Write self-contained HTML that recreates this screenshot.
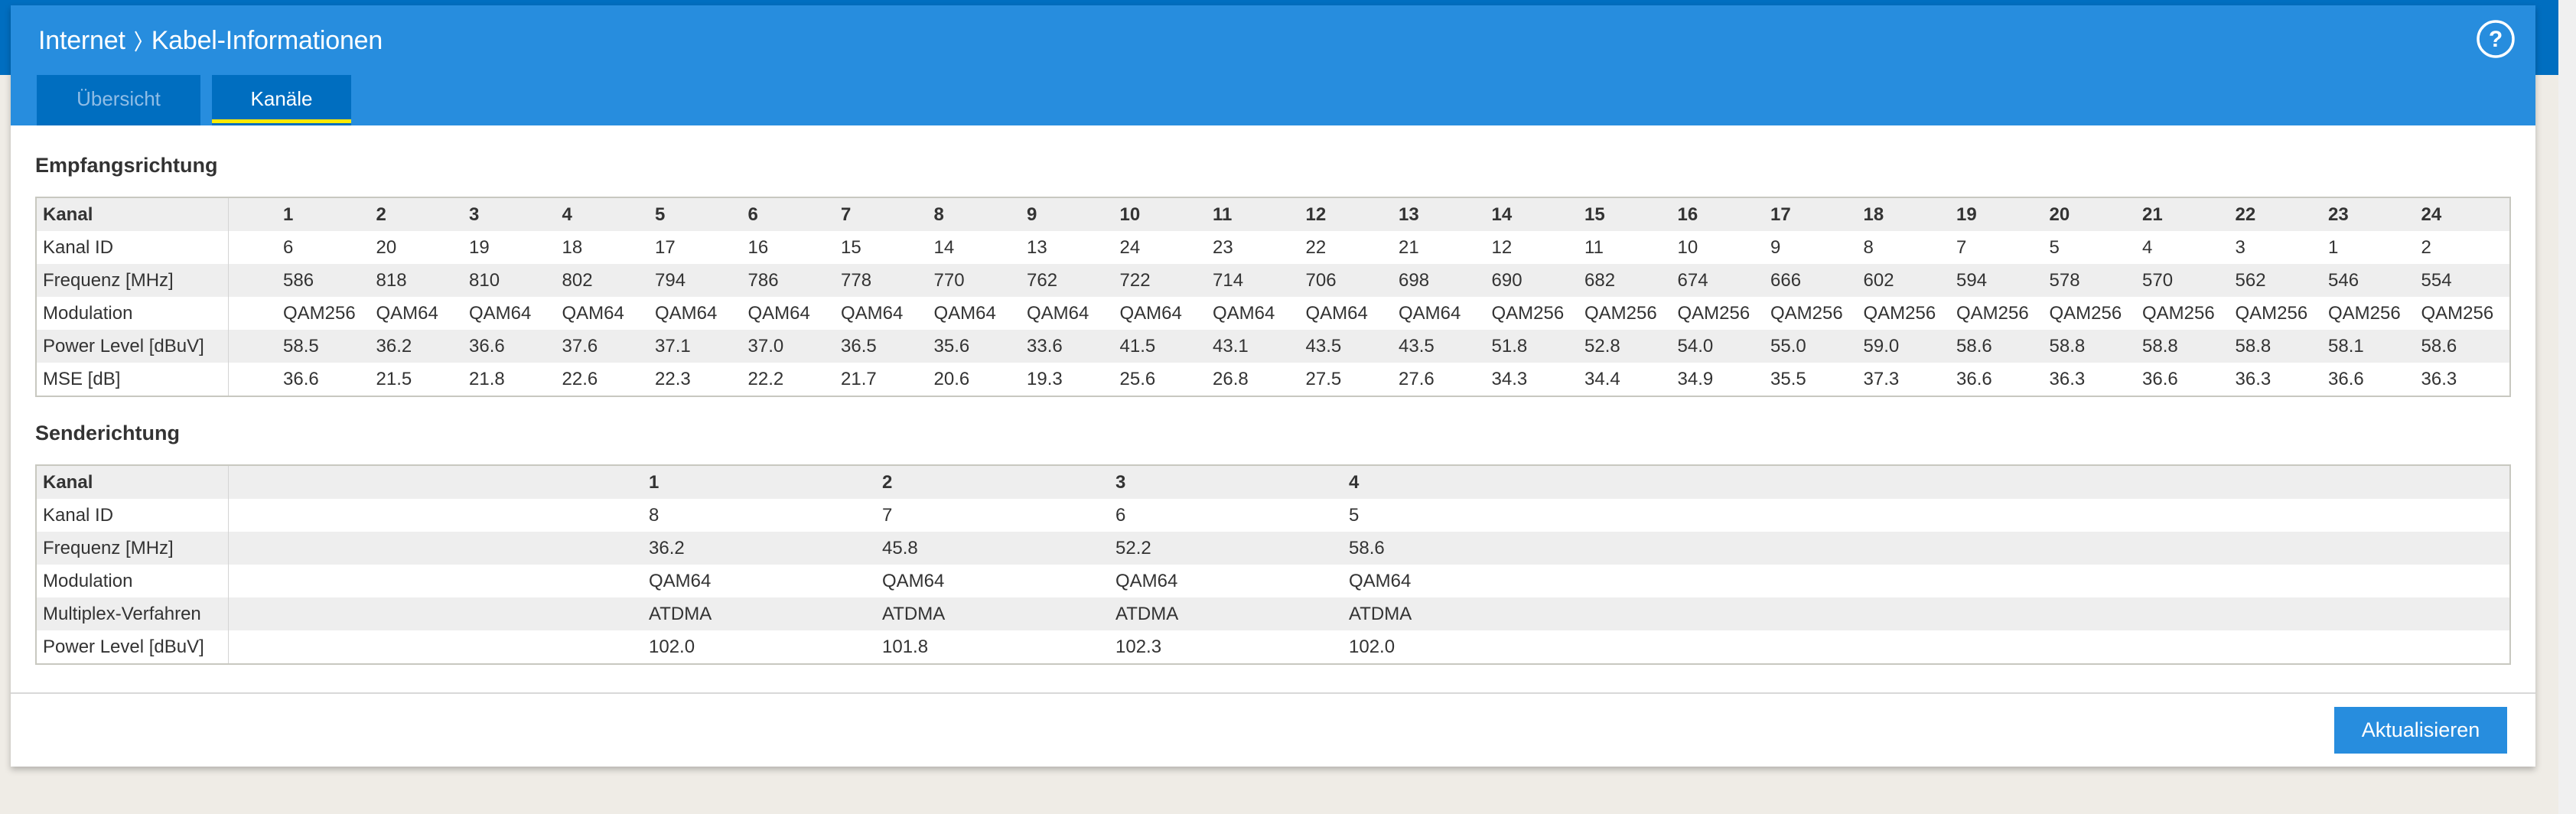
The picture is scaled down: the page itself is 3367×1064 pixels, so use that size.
<!DOCTYPE html>
<html><head><meta charset="utf-8"><style>
*{margin:0;padding:0;box-sizing:border-box}
body{width:3367px;height:1064px;background:#efece6;position:relative;overflow:hidden;font-family:"Liberation Sans",sans-serif;color:#333}
.band{position:absolute;left:0;top:0;width:3344px;height:98px;background:#006ec0}
.gray{position:absolute;left:3344px;top:0;width:23px;height:1064px;background:#f0f0f0}
.panel{position:absolute;left:14px;top:7px;width:3300px;height:995px;background:#fff;box-shadow:0 4px 8px rgba(0,0,0,.25)}
.head{position:absolute;left:0;top:0;width:3300px;height:157px;background:#278dde}
.title{position:absolute;left:36px;top:27px;color:#fff;font-size:34px;letter-spacing:-0.2px;white-space:nowrap}
.title svg{vertical-align:-4px;margin:0 12px 0 12px}
.tab{position:absolute;top:91px;height:66px;background:#006ec0;color:#fff;font-size:26px;text-align:center;line-height:62px}
.h2{position:absolute;left:32px;font-weight:bold;font-size:27px;color:#333}
.tbl{position:absolute;left:32px;width:3236px;border:2px solid #c8c8c0}
.row{position:relative;height:43px;font-size:24px;line-height:43px}
.row.g{background:#eee}
.row span{position:absolute;top:0;white-space:nowrap}
.row .l{left:8px}
.row.b{font-weight:bold}
.vl{position:absolute;left:250px;top:0;bottom:0;width:1px;background:#d4d4d4}
.sep{position:absolute;left:0;top:898px;width:3300px;height:2px;background:#d8d8d8}
.btn{position:absolute;left:3037px;top:917px;width:226px;height:61px;background:#278dde;color:#fff;font-size:27px;text-align:center;line-height:61px}
</style></head><body>
<div class="band"></div><div class="gray"></div>
<div class="panel">
<div class="head">
<div class="title">Internet<svg width="10" height="28" viewBox="0 0 10 28"><path d="M1 1 L8 14 L1 27" fill="none" stroke="#fff" stroke-width="2"/></svg>Kabel-Informationen</div>
<svg style="position:absolute;left:3222px;top:18px" width="52" height="52" viewBox="0 0 52 52"><circle cx="26" cy="26" r="23" fill="none" stroke="#fff" stroke-width="3.5"/><text x="26" y="36" text-anchor="middle" fill="#fff" font-family="Liberation Sans" font-weight="bold" font-size="30">?</text></svg>
<div class="tab" style="left:34px;width:214px;color:#8fbde6">Übersicht</div>
<div class="tab" style="left:263px;width:182px">Kanäle<div style="position:absolute;left:0;bottom:3px;width:182px;height:5px;background:#ffea00"></div></div>
</div>
<div class="h2" style="top:194px">Empfangsrichtung</div>
<div class="tbl" style="top:250px" id="t1"></div>
<div class="h2" style="top:544px">Senderichtung</div>
<div class="tbl" style="top:600px" id="t2"></div>
<div class="sep"></div>
<div class="btn">Aktualisieren</div>
</div>
<script>
function build(id,rows,x0,dx){var t=document.getElementById(id),h='';rows.forEach(function(r,i){h+='<div class="row'+(i%2==0?' g':'')+(i==0?' b':'')+'"><span class="l">'+r[0]+'</span>';for(var j=1;j<r.length;j++)h+='<span style="left:'+(x0+(j-1)*dx)+'px">'+r[j]+'</span>';h+='</div>'});t.innerHTML=h+'<div class="vl"></div>';}
var k=[];for(var i=1;i<=24;i++)k.push(i);
build('t1',[
['Kanal'].concat(k),
['Kanal ID',6,20,19,18,17,16,15,14,13,24,23,22,21,12,11,10,9,8,7,5,4,3,1,2],
['Frequenz [MHz]',586,818,810,802,794,786,778,770,762,722,714,706,698,690,682,674,666,602,594,578,570,562,546,554],
['Modulation','QAM256','QAM64','QAM64','QAM64','QAM64','QAM64','QAM64','QAM64','QAM64','QAM64','QAM64','QAM64','QAM64','QAM256','QAM256','QAM256','QAM256','QAM256','QAM256','QAM256','QAM256','QAM256','QAM256','QAM256'],
['Power Level [dBuV]','58.5','36.2','36.6','37.6','37.1','37.0','36.5','35.6','33.6','41.5','43.1','43.5','43.5','51.8','52.8','54.0','55.0','59.0','58.6','58.8','58.8','58.8','58.1','58.6'],
['MSE [dB]','36.6','21.5','21.8','22.6','22.3','22.2','21.7','20.6','19.3','25.6','26.8','27.5','27.6','34.3','34.4','34.9','35.5','37.3','36.6','36.3','36.6','36.3','36.6','36.3']
],322,121.5);
build('t2',[
['Kanal',1,2,3,4],['Kanal ID',8,7,6,5],['Frequenz [MHz]','36.2','45.8','52.2','58.6'],['Modulation','QAM64','QAM64','QAM64','QAM64'],['Multiplex-Verfahren','ATDMA','ATDMA','ATDMA','ATDMA'],['Power Level [dBuV]','102.0','101.8','102.3','102.0']
],800,305);
</script>
</body></html>
